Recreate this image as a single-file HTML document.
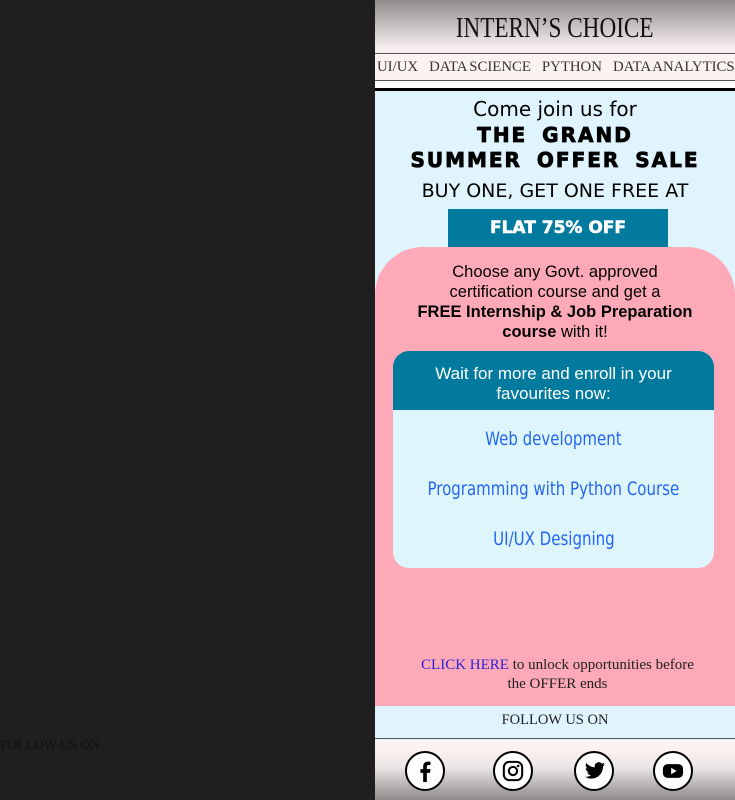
<!DOCTYPE html>
<html><head><style>
*{margin:0;padding:0;box-sizing:border-box}
body{width:735px;height:800px;background:#1f1f1f;position:relative;overflow:hidden;font-family:"Liberation Sans",sans-serif}
.lf{position:absolute;left:0;top:738px;font-family:"Liberation Serif",serif;font-size:14px;color:#111;letter-spacing:-.3px}
.p{position:absolute;left:375px;top:0;width:360px;height:800px;background:#dff4fc}
.hd{position:absolute;top:0;left:0;width:360px;height:53px;background:linear-gradient(#8f8b8b,#f6eeee 90%);text-align:center;color:#111}
.hd span{display:inline-block;font-family:"Liberation Serif",serif;font-size:29px;line-height:56px;transform:scaleX(.8);white-space:nowrap}
.nav{position:absolute;top:53px;left:0;width:360px;height:28px;background:#fdf2f2;border-top:1px solid #555;border-bottom:1px solid #555;font-family:"Liberation Serif",serif;font-size:14.8px;line-height:27px;color:#333;white-space:nowrap;padding-left:2px;word-spacing:-1px;overflow:hidden}
.nav span{margin-right:11px}
.gap{position:absolute;top:81px;left:0;width:360px;height:7px;background:#fff}
.bl{position:absolute;top:88px;left:0;width:360px;height:3px;background:#000}
.c{position:absolute;left:0;width:360px;text-align:center;color:#000}
.big{font-family:"DejaVu Sans",sans-serif;font-weight:900;font-size:20px;letter-spacing:2px;word-spacing:6px;-webkit-text-stroke:.8px #000}
.flat{position:absolute;left:73px;top:209px;width:220px;height:38px;background:#027a9e;color:#fff;font-family:"DejaVu Sans",sans-serif;font-weight:900;font-size:17px;text-align:center;line-height:38px;-webkit-text-stroke:.6px #fff}
.pink{position:absolute;left:0;top:247px;width:360px;height:459px;background:#fda9b8;border-radius:48px 48px 0 0}
.card{position:absolute;left:18px;top:104px;width:321px;height:217px;background:#dff5fc;border-radius:16px;overflow:hidden}
.ch{height:59px;background:#027a9e;color:#fff;font-size:17px;line-height:20px;text-align:center;padding:13px 35px 0}
.it{text-align:center;color:#2466f0;height:50px;line-height:58px}
.it span{display:inline-block;font-family:"DejaVu Sans",sans-serif;font-size:19px;transform:scaleX(.79);white-space:nowrap}
.fol{position:absolute;top:706px;left:0;width:360px;height:33px;text-align:center;font-family:"Liberation Serif",serif;font-size:14.5px;line-height:28px;color:#222;border-bottom:1.5px solid #555}
.ic{position:absolute;top:740px;left:0;width:360px;height:60px;background:linear-gradient(#fdf2f2 15%,#ebe5e5 45%,#8f8b8b)}
.ci{position:absolute;top:11px;width:40px;height:40px;border:2px solid #000;border-radius:50%;background:#fff}
.ci svg{position:absolute;left:7px;top:7px}
</style></head><body>
<div class="lf">FOLLOW US ON</div>
<div class="p">
<div class="hd"><span>INTERN’S CHOICE</span></div>
<div class="nav"><span>UI/UX</span><span>DATA SCIENCE</span><span>PYTHON</span><span>DATA ANALYTICS</span></div>
<div class="gap"></div><div class="bl"></div>
<div class="c" style="top:97px;font-size:20px;font-family:'DejaVu Sans',sans-serif">Come join us for</div>
<div class="c big" style="top:123px">THE GRAND</div>
<div class="c big" style="top:148px">SUMMER OFFER SALE</div>
<div class="c" style="top:180px;font-size:19px;font-family:'DejaVu Sans',sans-serif">BUY ONE, GET ONE FREE AT</div>
<div class="flat">FLAT 75% OFF</div>
<div class="pink">
<div class="c" style="top:15px;font-size:16.5px;line-height:20px;padding:0 30px"><div style="padding:0 26px">Choose any Govt. approved certification course and get a</div><b>FREE Internship &amp; Job Preparation course</b> with it!</div>
<div class="card"><div class="ch">Wait for more and enroll in your favourites now:</div>
<div class="it"><span>Web development</span></div><div class="it"><span>Programming with Python Course</span></div><div class="it"><span>UI/UX Designing</span></div></div>
<div class="c" style="top:409px;font-family:'Liberation Serif',serif;font-size:15px;line-height:19px;color:#222;padding:0 35px 0 40px"><span style="color:#2a1fd6">CLICK HERE</span> to unlock opportunities before the OFFER ends</div>
</div>
<div class="fol">FOLLOW US ON</div>
<div class="ic">
<div class="ci" style="left:30px"><svg width="22" height="22" viewBox="0 0 24 24"><path d="M14 24V14h3.5l.5-4h-4V7.5c0-1.2.4-2 2-2h2V2c-.4 0-1.7-.2-3-.2-3 0-5 1.8-5 5.2V10H7v4h3v10z" fill="#000"/></svg></div>
<div class="ci" style="left:118px"><svg width="22" height="22" viewBox="0 0 24 24"><rect x="2" y="2" width="20" height="20" rx="6" fill="none" stroke="#000" stroke-width="2.2"/><circle cx="12" cy="12" r="4.5" fill="none" stroke="#000" stroke-width="2.2"/><circle cx="17.6" cy="6.4" r="1.4"/></svg></div>
<div class="ci" style="left:199px"><svg width="24" height="22" viewBox="0 0 24 24"><path d="M23 4.6c-.8.4-1.7.6-2.6.7.9-.6 1.6-1.4 2-2.5-.9.5-1.9.9-2.9 1.1A4.5 4.5 0 0 0 11.8 8 12.8 12.8 0 0 1 2.5 3.3a4.5 4.5 0 0 0 1.4 6 4.4 4.4 0 0 1-2-.6v.1c0 2.2 1.5 4 3.6 4.4a4.5 4.5 0 0 1-2 .1 4.5 4.5 0 0 0 4.2 3.1A9 9 0 0 1 1 18.3 12.8 12.8 0 0 0 7.9 20.3c8.3 0 12.8-6.9 12.8-12.8v-.6c.9-.6 1.6-1.4 2.3-2.3z"/></svg></div>
<div class="ci" style="left:278px"><svg width="22" height="22" viewBox="0 0 24 24"><rect x="1" y="4.5" width="22" height="15" rx="5"/><path d="M10 8.5v7l6-3.5z" fill="#fff"/></svg></div>
</div>
</div>
</body></html>
